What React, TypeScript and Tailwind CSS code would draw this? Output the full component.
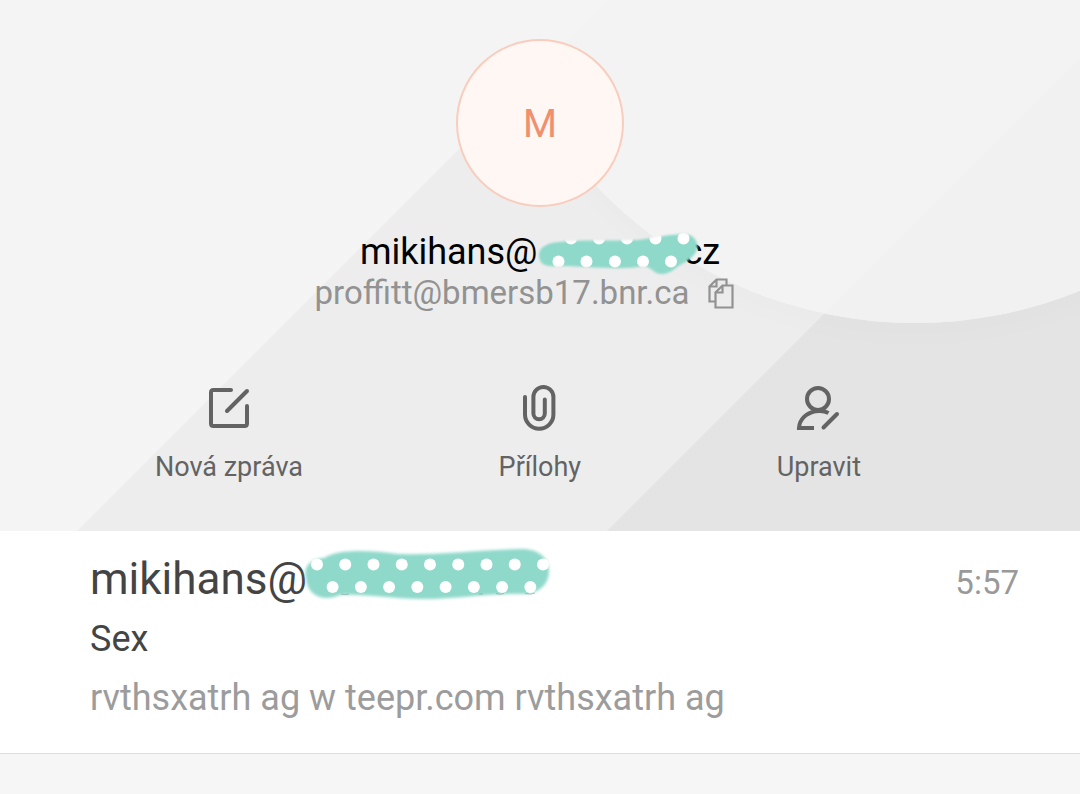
import type { ReactNode } from 'react';

const actions: { label: string; icon: ReactNode }[] = [
  {
    label: 'Nová zpráva',
    icon: (
      <svg viewBox="0 0 48 48" className="size-12" fill="none" stroke="#636363" strokeWidth="4" strokeLinecap="round" aria-hidden="true">
        <path d="M26 6H8.500Q6 6 6 8.500V39.500Q6 42 8.500 42H39.500Q42 42 42 39.500V22" />
        <path d="M22 27 42 7" />
      </svg>
    ),
  },
  {
    label: 'Přílohy',
    icon: (
      <svg viewBox="0 0 48 48" className="size-12" fill="none" stroke="#636363" strokeWidth="4" strokeLinecap="round" aria-hidden="true">
        <path d="M9 13V30.500a14.200 14.200 0 0 0 28.400 0V13a10 10 0 0 0-20 0V29.500a5.700 5.700 0 0 0 11.400 0V15.500" />
      </svg>
    ),
  },
  {
    label: 'Upravit',
    icon: (
      <svg viewBox="0 0 48 48" className="size-12" fill="none" stroke="#636363" strokeWidth="4" aria-hidden="true">
        <circle cx="23" cy="15" r="11" />
        <path d="M33.500 29C30 27 25.500 26.500 20.500 27.300C11.500 29 4.500 35 4 43.900H19" />
        <path d="M28.500 43.500 42 30" strokeLinecap="round" />
      </svg>
    ),
  },
];

function HeaderScribble() {
  const top = [11, 39, 67, 95, 123.500, 151.500];
  const bottom = [26.500, 54.500, 83, 111, 139];
  return (
    <svg viewBox="0 0 176 52" className="absolute -left-[5px] -top-[3px] h-[52px] w-[176px] max-w-none" aria-hidden="true">
      <defs>
        <filter id="softA" x="-10%" y="-20%" width="120%" height="140%">
          <feGaussianBlur stdDeviation="1" />
        </filter>
        <mask id="blobA">
          <path
            filter="url(#softA)"
            fill="white"
            d="M7 27C7 19 15 15 27 14C48 11.500 80 13 105 12C122 10 140 6 152 6C161 6 167 13 165 22C161 30 154 34 148 37C142 41 139 45 131 46C122 47 120 39 112 38C88 43 55 38 24 38C13 39 7 36 7 27Z"
          />
        </mask>
      </defs>
      <g mask="url(#blobA)">
        <rect width="176" height="52" fill="#8fd9ca" />
        {top.map((x) => <circle key={x} cx={x} cy="10.500" r="6" fill="white" />)}
        {bottom.map((x) => <circle key={x} cx={x} cy="33.500" r="6" fill="white" />)}
      </g>
    </svg>
  );
}

function SenderScribble() {
  return (
    <svg viewBox="0 0 264 64" className="absolute -left-3 -top-3 h-16 w-[264px] max-w-none" aria-hidden="true">
      <defs>
        <filter id="softB" x="-10%" y="-20%" width="120%" height="140%">
          <feGaussianBlur stdDeviation="1.600" />
        </filter>
        <mask id="blobB">
          <path
            filter="url(#softB)"
            fill="white"
            d="M11 37C8 27 14 18 29 17C43 8 73 9 103 13C143 14 181 9 225 8C242 7 254 16 254 30C254 44 243 54 225 53C195 52 163 58 126 58C95 58 74 53 45 54C30 61 12 56 11 37Z"
          />
        </mask>
      </defs>
      <g mask="url(#blobB)">
        <rect width="264" height="64" fill="#8fd9ca" />
        {[0, 1, 2, 3, 4, 5, 6, 7, 8].map((i) => <circle key={i} cx={22 + i * 28.250} cy="23.500" r="6" fill="white" />)}
        {[0, 1, 2, 3, 4, 5, 6, 7].map((i) => <circle key={i} cx={37.600 + i * 28.250} cy="46" r="6" fill="white" />)}
      </g>
      <g fill="none" stroke="#7f9c96" strokeWidth="1" opacity=".6">
        <path d="M46 53q3 1 8 0M184 53h4M201 52.500q4 1.500 8 0M230 52.500q6 1.500 10-.5" />
      </g>
    </svg>
  );
}

function Backdrop() {
  return (
    <svg viewBox="0 0 1080 531" preserveAspectRatio="xMidYMid slice" className="absolute inset-0 size-full" aria-hidden="true">
      <defs>
        <clipPath id="disc">
          <circle cx="915" cy="-116.500" r="439.500" />
        </clipPath>
        <filter id="shade" x="-20%" y="-20%" width="140%" height="140%">
          <feGaussianBlur stdDeviation="12" />
        </filter>
      </defs>
      <rect width="1080" height="531" fill="#f4f4f4" />
      <path d="M77 531 608 0H1080V531Z" fill="#ededed" />
      <path d="M607 531 1080 58V531Z" fill="#e4e4e4" />
      <circle cx="915" cy="-100" r="439.500" fill="#000" opacity=".009" filter="url(#shade)" />
      <g clipPath="url(#disc)">
        <rect width="1080" height="531" fill="#f3f3f3" />
        <path d="M607 531 1080 58V531Z" fill="#f1f1f1" />
      </g>
      <path d="M0 0H608L456 152H0Z" fill="#f4f4f4" />
    </svg>
  );
}

export default function App() {
  return (
    <div className="min-h-screen bg-[#f6f6f6] font-['Roboto',sans-serif]">
      <header className="relative overflow-hidden bg-[#f4f4f4] pt-[39px] pb-12">
        <Backdrop />
        <div className="relative flex flex-col items-center">
          <div className="flex size-[168px] items-center justify-center rounded-full border-2 border-[#f9cdbd] bg-[#fff7f4] pt-0.5 text-[39px] leading-[48px] text-[#f0906f]">
            M
          </div>
          <h1 className="mt-6 flex text-[36px] leading-[42px] text-black">
            mikihans@
            <span className="relative w-[146px]">
              <span className="absolute inset-0 z-10">
                <HeaderScribble />
              </span>
            </span>
            cz
          </h1>
          <div className="flex items-center gap-[18px] pr-8 text-[33px] leading-10 text-[#929292]">
            <span>proffitt@bmersb17.bnr.ca</span>
            <button type="button" aria-label="Kopírovat" className="cursor-pointer">
              <svg viewBox="0 0 26 31" className="h-[31px] w-[26px]" fill="none" stroke="#929292" strokeWidth="2.200" aria-hidden="true">
                <path d="M18.500 7.500V1.500H8.500L1.500 8.500V23.500H7M1.500 8.500H8.500V1.500" />
                <path d="M14.500 7.500H24.500V29.500H7.500V14.500ZM7.500 14.500H14.500V7.500" />
              </svg>
            </button>
          </div>
        </div>
        <nav className="relative mt-[71px] flex justify-between pr-[219px] pl-[155px]">
          {actions.map((action) => (
            <button key={action.label} type="button" className="flex cursor-pointer flex-col items-center gap-[19px] text-[27px] leading-8 text-[#636363]">
              {action.icon}
              {action.label}
            </button>
          ))}
        </nav>
      </header>
      <main>
        <article className="border-b border-[#dedede] bg-white pt-[22px] pr-[61px] pb-[34px] pl-[90px]">
          <div className="flex items-baseline justify-between">
            <h2 className="flex text-[44px] leading-[52px] text-[#444444]">
              mikihans@
              <span className="relative">
                <SenderScribble />
              </span>
            </h2>
            <time className="text-[33px] leading-10 text-[#999999]">5:57</time>
          </div>
          <p className="mt-[13px] text-[36px] leading-[42px] text-[#444444]">Sex</p>
          <p className="mt-[17px] text-[36px] leading-[42px] text-[#9c9c9c]">rvthsxatrh ag w teepr.com rvthsxatrh ag</p>
        </article>
      </main>
    </div>
  );
}
